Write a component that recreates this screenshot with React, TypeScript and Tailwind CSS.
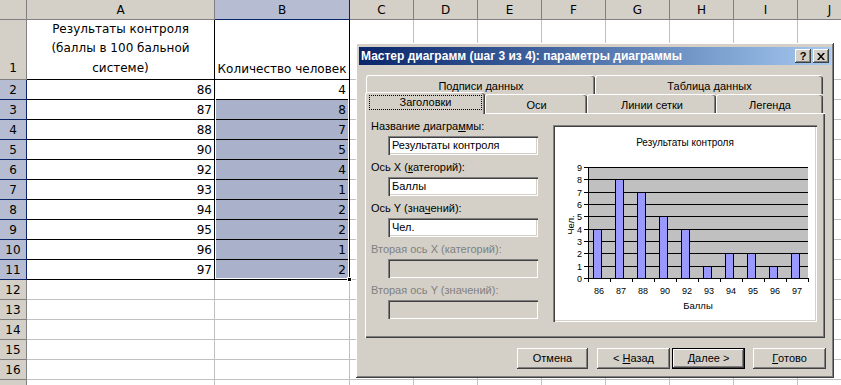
import React from 'react';

const data: [number, number][] = [
  [86, 4], [87, 8], [88, 7], [90, 5], [92, 4],
  [93, 1], [94, 2], [95, 2], [96, 1], [97, 2],
];

const raised =
  'shadow-[inset_-1px_-1px_0_#404040,inset_1px_1px_0_#ffffff,inset_-2px_-2px_0_#808080,inset_2px_2px_0_#d4d0c8]';
const sunken =
  'shadow-[inset_1px_1px_0_#808080,inset_2px_2px_0_#404040,inset_-1px_-1px_0_#ffffff,inset_-2px_-2px_0_#d4d0c8]';

const letters = ['A', 'B', 'C', 'D', 'E', 'F', 'G', 'H', 'I', 'J'];

function Sheet() {
  const hdr = 'flex items-center justify-center bg-[#d4d0c8] border-r border-b border-[#808080]';
  const hdrSel = 'flex items-center justify-center bg-[#b6bdd2] border-r border-b border-[#0a246a]';
  const plain = 'bg-white border-r border-b border-[#c0c0c0]';
  const cells: React.ReactNode[] = [];

  cells.push(<div key="corner" className={hdr} />);
  letters.forEach((l) =>
    cells.push(
      <div key={'h' + l} className={l === 'B' ? hdrSel : hdr}>
        {l}
      </div>
    )
  );

  // row 1 - table headings
  cells.push(
    <div key="r1" className="flex items-end justify-center bg-[#d4d0c8] border-r border-b border-[#808080] pb-[2px]">
      1
    </div>
  );
  cells.push(
    <div key="a1" className="flex flex-col items-center justify-end bg-white border-r border-b border-black pb-[1px] leading-[19.5px] text-center">
      <span>Результаты контроля</span>
      <span>(баллы в 100 бальной</span>
      <span>системе)</span>
    </div>
  );
  cells.push(
    <div key="b1" className="flex items-end justify-center bg-white border-r border-b border-black pb-[1px] whitespace-nowrap">
      Количество человек
    </div>
  );
  letters.slice(2).forEach((l) => cells.push(<div key={'1' + l} className={plain} />));

  data.forEach(([score, count], i) => {
    const r = i + 2;
    cells.push(
      <div key={'r' + r} className={hdrSel}>
        {r}
      </div>
    );
    cells.push(
      <div key={'a' + r} className="flex items-center justify-end bg-white border-r border-b border-black pr-[2px]">
        {score}
      </div>
    );
    cells.push(
      <div
        key={'b' + r}
        className={`flex items-center justify-end border-r border-b border-black pr-[3px] ${r === 2 ? 'bg-white' : 'bg-[#a9b1cb]'}`}
      >
        {count}
      </div>
    );
    letters.slice(2).forEach((l) => cells.push(<div key={r + l} className={plain} />));
  });

  for (let r = 12; r <= 17; r++) {
    cells.push(
      <div key={'r' + r} className={hdr}>
        {r < 17 ? r : null}
      </div>
    );
    letters.forEach((l) => cells.push(<div key={r + l} className={plain} />));
  }

  return (
    <div className="relative">
      <div className="grid grid-cols-[27px_188px_135px_repeat(7,64px)_64px] grid-rows-[20px_60px] auto-rows-[20px]">
        {cells}
      </div>
      {/* selection frame B2:B11 */}
      <div className="pointer-events-none absolute left-[214px] top-[79px] h-[201px] w-[136px] border border-black shadow-[inset_0_0_0_1px_#ffffff]" />
      <div className="pointer-events-none absolute left-[347px] top-[277px] h-[5px] w-[5px] border border-white bg-black" />
    </div>
  );
}

function Chart() {
  const x0 = 33;
  const yTop = 40;
  const yBase = 151;
  const step = (yBase - yTop) / 9;
  const gy = (k: number) => Math.round(yBase - k * step) + 0.5;

  return (
    <svg width="260" height="193" className="block bg-white" fontFamily="'Liberation Sans', Arial, sans-serif">
      <text x="130" y="19" fontSize="10" textAnchor="middle">
        Результаты контроля
      </text>
      <rect x={x0} y={yTop} width={220} height={yBase - yTop} fill="#c0c0c0" />
      {Array.from({ length: 10 }, (_, k) => (
        <g key={k}>
          <line x1={x0 - 4} x2={253} y1={gy(k)} y2={gy(k)} stroke="#000" />
          <text x="27" y={gy(k) + 3} fontSize="9" textAnchor="end">
            {k}
          </text>
        </g>
      ))}
      {data.map(([score, v], i) => {
        const top = gy(v);
        return (
          <g key={score}>
            <rect x={38.5 + 22 * i} y={top} width={8} height={gy(0) - top} fill="#9999ff" stroke="#000" />
            <text x={x0 + 11 + 22 * i} y="167" fontSize="9" textAnchor="middle">
              {score}
            </text>
          </g>
        );
      })}
      <line x1={x0 + 0.5} x2={x0 + 0.5} y1={yTop} y2={yBase + 4} stroke="#000" />
      {Array.from({ length: 10 }, (_, i) => (
        <line key={i} x1={x0 + 22 * (i + 1) + 0.5} x2={x0 + 22 * (i + 1) + 0.5} y1={yBase} y2={yBase + 4} stroke="#000" />
      ))}
      <text x="143" y="182" fontSize="9.5" textAnchor="middle">
        Баллы
      </text>
      <text x="0" y="0" fontSize="9.5" textAnchor="middle" transform="translate(19 98) rotate(-90)">
        Чел.
      </text>
    </svg>
  );
}

function Field({ label, value, disabled }: { label: React.ReactNode; value?: string; disabled?: boolean }) {
  return (
    <div className="mb-[6px]">
      <div className={`h-[13px] leading-[13px] ${disabled ? 'text-[#808080]' : 'text-black'}`}>{label}</div>
      <div
        className={`ml-[17px] mt-[3px] flex h-[19px] w-[150px] items-center pl-[4px] ${sunken} ${disabled ? 'bg-[#d4d0c8]' : 'bg-white'}`}
      >
        {value}
      </div>
    </div>
  );
}

function Tab({ w, children }: { w: string; children: React.ReactNode }) {
  return (
    <div
      className={`${w} flex items-center justify-center rounded-t-[3px] border-l border-t border-white pt-[2px] shadow-[inset_-1px_0_0_#404040,inset_-2px_0_0_#808080]`}
    >
      {children}
    </div>
  );
}

function Button({ w, def, children }: { w: string; def?: boolean; children: React.ReactNode }) {
  return (
    <div
      className={`${w} flex h-[21px] items-center justify-center ${raised} ${def ? 'border border-black' : ''}`}
    >
      {children}
    </div>
  );
}

function Dialog() {
  return (
    <div
      className={`absolute left-[356px] top-[43px] h-[335px] w-[478px] bg-[#d4d0c8] p-[3px] font-['Liberation_Sans',Arial,sans-serif] text-[11px] text-black ${raised}`}
    >
      <div className="mt-px flex h-[18px] items-center bg-linear-to-r from-[#0a246a] to-[#a6caf0] pl-[2px] pr-[2px]">
        <span className="flex-1 text-[12px] font-bold text-white">
          Мастер диаграмм (шаг 3 из 4): параметры диаграммы
        </span>
        <div className={`flex h-[14px] w-[16px] items-center justify-center bg-[#d4d0c8] text-[11px] font-bold ${raised}`}>
          ?
        </div>
        <div className={`ml-[2px] flex h-[14px] w-[16px] items-center justify-center bg-[#d4d0c8] ${raised}`}>
          <svg width="8" height="7" viewBox="0 0 8 7">
            <path d="M0 0h2l2 2.5L6 0h2L5 3.5 8 7H6L4 4.5 2 7H0l3-3.5z" fill="#000" />
          </svg>
        </div>
      </div>

      <div className="ml-[6px] mt-[10px] w-[460px]">
        <div className="flex h-[19px] pl-px">
          <Tab w="w-[229px]">Подписи данных</Tab>
          <Tab w="w-[228px]">Таблица данных</Tab>
        </div>
        <div className="relative z-10 flex h-[19px]">
          <div className="-mt-[2px] flex h-[22px] w-[120px] items-start justify-center rounded-t-[3px] border-l border-t border-white bg-[#d4d0c8] pt-[2px] shadow-[inset_-1px_0_0_#404040,inset_-2px_0_0_#808080]">
            <div className="flex h-[15px] w-[113px] items-center justify-center border border-dotted border-black">
              Заголовки
            </div>
          </div>
          <Tab w="w-[102px]">Оси</Tab>
          <Tab w="w-[129px]">Линии сетки</Tab>
          <Tab w="w-[107px]">Легенда</Tab>
        </div>
        <div className="flex h-[225px] pl-[6px] shadow-[inset_1px_1px_0_#ffffff,inset_-1px_-1px_0_#404040,inset_-2px_-2px_0_#808080]">
          <div className="w-[182px] pt-[7px]">
            <Field
              label={
                <>
                  Название диагра<span className="underline">м</span>мы:
                </>
              }
              value="Результаты контроля"
            />
            <Field
              label={
                <>
                  Ось X (<span className="underline">к</span>атегорий):
                </>
              }
              value="Баллы"
            />
            <Field
              label={
                <>
                  Ось Y (зна<span className="underline">ч</span>ений):
                </>
              }
              value="Чел."
            />
            <Field label="Вторая ось X (категорий):" disabled />
            <Field label="Вторая ось Y (значений):" disabled />
          </div>
          <div className={`mt-[12px] h-[197px] w-[264px] p-[2px] ${sunken}`}>
            <Chart />
          </div>
        </div>
      </div>

      <div className="ml-[158px] mt-[10px] flex">
        <Button w="w-[71px]">Отмена</Button>
        <div className="w-[9px]" />
        <Button w="w-[73px]">
          &lt;&nbsp;<span className="underline">Н</span>азад
        </Button>
        <div className="w-[2px]" />
        <Button w="w-[73px]" def>
          <span className="underline">Д</span>алее &gt;
        </Button>
        <div className="w-[8px]" />
        <Button w="w-[73px]">
          <span className="underline">Г</span>отово
        </Button>
      </div>
    </div>
  );
}

export default function App() {
  return (
    <div className="relative h-[385px] w-[841px] overflow-hidden bg-white font-['DejaVu_Sans',sans-serif] text-[12px] text-black">
      <Sheet />
      <Dialog />
    </div>
  );
}
